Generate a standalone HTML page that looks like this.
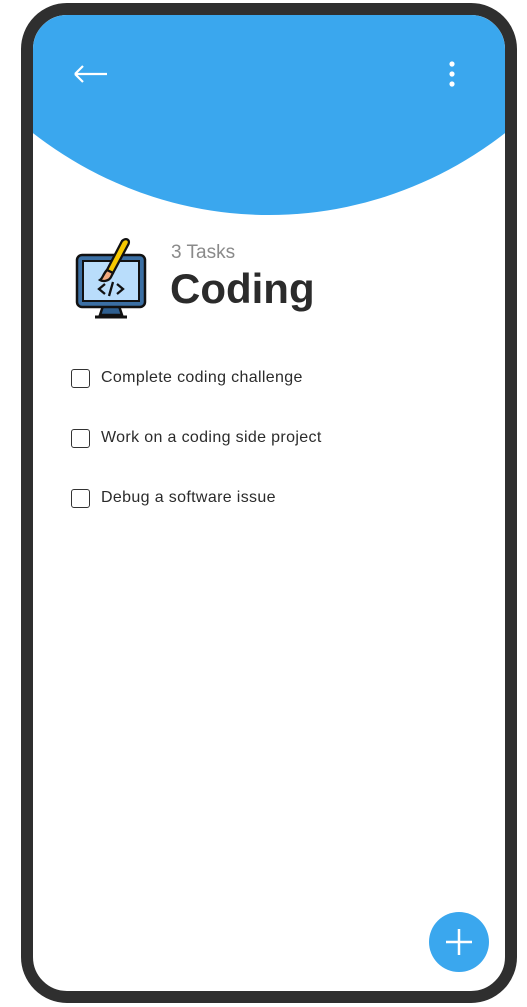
<!DOCTYPE html>
<html><head><style>
body{margin:0;width:527px;height:1007px;background:#fff;position:relative;overflow:hidden;font-family:"Liberation Sans",sans-serif}
.phone{position:absolute;left:21px;top:3px;width:472px;height:976px;border:12px solid #2f2f2f;border-radius:46px;overflow:hidden;background:#fff}
.blob{position:absolute;left:-164px;top:-650px;width:800px;height:850px;border-radius:50%;background:#3aa7ee}
.t{position:absolute;color:#2b2b2b}
.cb{position:absolute;left:38px;width:17px;height:17px;border:1.5px solid #333;border-radius:3px}
.task{position:absolute;left:68px;font-size:16px;letter-spacing:0.35px;color:#2b2b2b}
.fab{position:absolute;left:396px;top:897px;width:60px;height:60px;border-radius:50%;background:#3aa7ee}
</style></head><body>
<div class="phone">
<div class="blob"></div>
<svg style="position:absolute;left:40px;top:49px" width="36" height="20" viewBox="0 0 36 20"><path d="M2 10H34M2 10L10 2M2 10L10 18" stroke="#fff" stroke-width="2.2" fill="none"/></svg>
<svg style="position:absolute;left:415px;top:45px" width="8" height="30"><circle cx="4" cy="4" r="2.6" fill="#fff"/><circle cx="4" cy="14" r="2.6" fill="#fff"/><circle cx="4" cy="24" r="2.6" fill="#fff"/></svg>
<svg style="position:absolute;left:42px;top:222px" width="74" height="84" viewBox="0 0 74 84">
<path d="M28 69h16l3 9H25z" fill="#2f5f8f" stroke="#111" stroke-width="2.5"/>
<rect x="2" y="18" width="68" height="52" rx="5" fill="#3b6fa3" stroke="#111" stroke-width="2.5"/>
<rect x="8" y="24" width="56" height="40" fill="#b9ddfb" stroke="#111" stroke-width="2"/>
<path d="M20 80h32" stroke="#111" stroke-width="3"/>
<path d="M30 47l-6 5 6 5M42 47l6 5-6 5M38 45l-4 14" stroke="#111" stroke-width="2.3" fill="none"/>
<path d="M47 4c4-4 9-1 6 4L38 36l-6-3z" fill="#f6c800" stroke="#111" stroke-width="2.3"/>
<path d="M32 33l6 3-2 4c-2 4-8 5-11 3 3-2 3-6 7-10z" fill="#f3a97f" stroke="#111" stroke-width="2.3"/>
</svg>
<div class="t" style="left:138px;top:227px;font-size:19px;color:#8a8a8a">3 Tasks</div>
<div class="t" style="left:137px;top:250px;font-size:42px;font-weight:bold;color:#2b2b2b">Coding</div>
<div class="cb" style="top:354px"></div><div class="task" style="top:354px">Complete coding challenge</div>
<div class="cb" style="top:414px"></div><div class="task" style="top:414px">Work on a coding side project</div>
<div class="cb" style="top:474px"></div><div class="task" style="top:474px">Debug a software issue</div>
<div class="fab"><svg width="60" height="60"><path d="M30 17v26M17 30h26" stroke="#fff" stroke-width="2.5"/></svg></div>
</div>
</body></html>
